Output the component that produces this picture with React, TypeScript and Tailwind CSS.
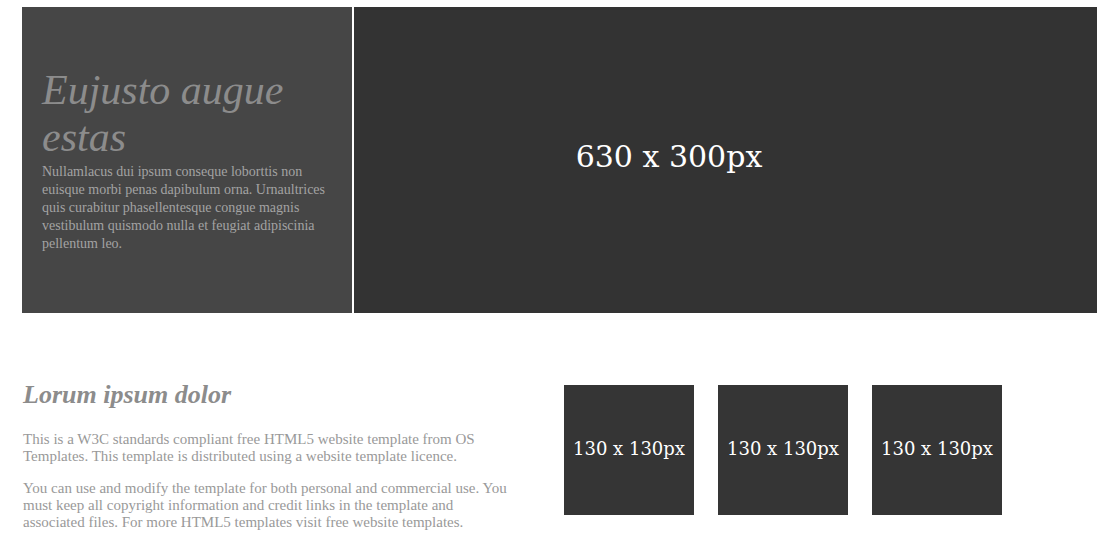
import React from "react";

const serif = { fontFamily: '"Liberation Serif", "Times New Roman", serif' };
const georgia = { fontFamily: '"DejaVu Serif", Georgia, serif' };

function Thumb() {
  return (
    <div className="w-[130px] h-[130px] bg-[#353535] flex items-center justify-center pb-[4px] text-white text-[18px]" style={georgia}>
      130 x 130px
    </div>
  );
}

export default function App() {
  return (
    <div className="bg-white w-[1105px] h-[548px] overflow-hidden" style={serif}>
      <div className="ml-[22px] mt-[7px] w-[1075px] h-[306px] flex gap-[2px]">
        <div className="w-[330px] shrink-0 bg-[#464646] px-[20px] pt-[60px]">
          <h1 className="italic text-[42px] leading-[47px] text-[#8c8c8c] font-normal">Eujusto augue estas</h1>
          <p className="mt-[2px] text-[14px] leading-[18px] text-[#a3a3a3]">
            Nullamlacus dui ipsum conseque loborttis non euisque morbi penas dapibulum orna. Urnaultrices quis curabitur phasellentesque congue magnis vestibulum quismodo nulla et feugiat adipiscinia pellentum leo.
          </p>
        </div>
        <div className="flex-1 bg-[#333333]">
          <div className="w-[630px] h-[300px] flex items-center justify-center pb-[2px] text-white text-[30px]" style={georgia}>
            630 x 300px
          </div>
        </div>
      </div>
      <div className="ml-[23px] mt-[67px] flex items-start">
        <div className="w-[491px] shrink-0">
          <h2 className="italic font-bold text-[26px] leading-[30px] text-[#8c8c8c]">Lorum ipsum dolor</h2>
          <p className="mt-[21px] text-[15px] leading-[17px] text-[#999999]">
            This is a W3C standards compliant free HTML5 website template from OS Templates. This template is distributed using a website template licence.
          </p>
          <p className="mt-[15px] text-[15px] leading-[17px] text-[#999999]">
            You can use and modify the template for both personal and commercial use. You must keep all copyright information and credit links in the template and associated files. For more HTML5 templates visit free website templates.
          </p>
        </div>
        <div className="ml-[50px] mt-[5px] flex gap-[24px]">
          <Thumb />
          <Thumb />
          <Thumb />
        </div>
      </div>
    </div>
  );
}
